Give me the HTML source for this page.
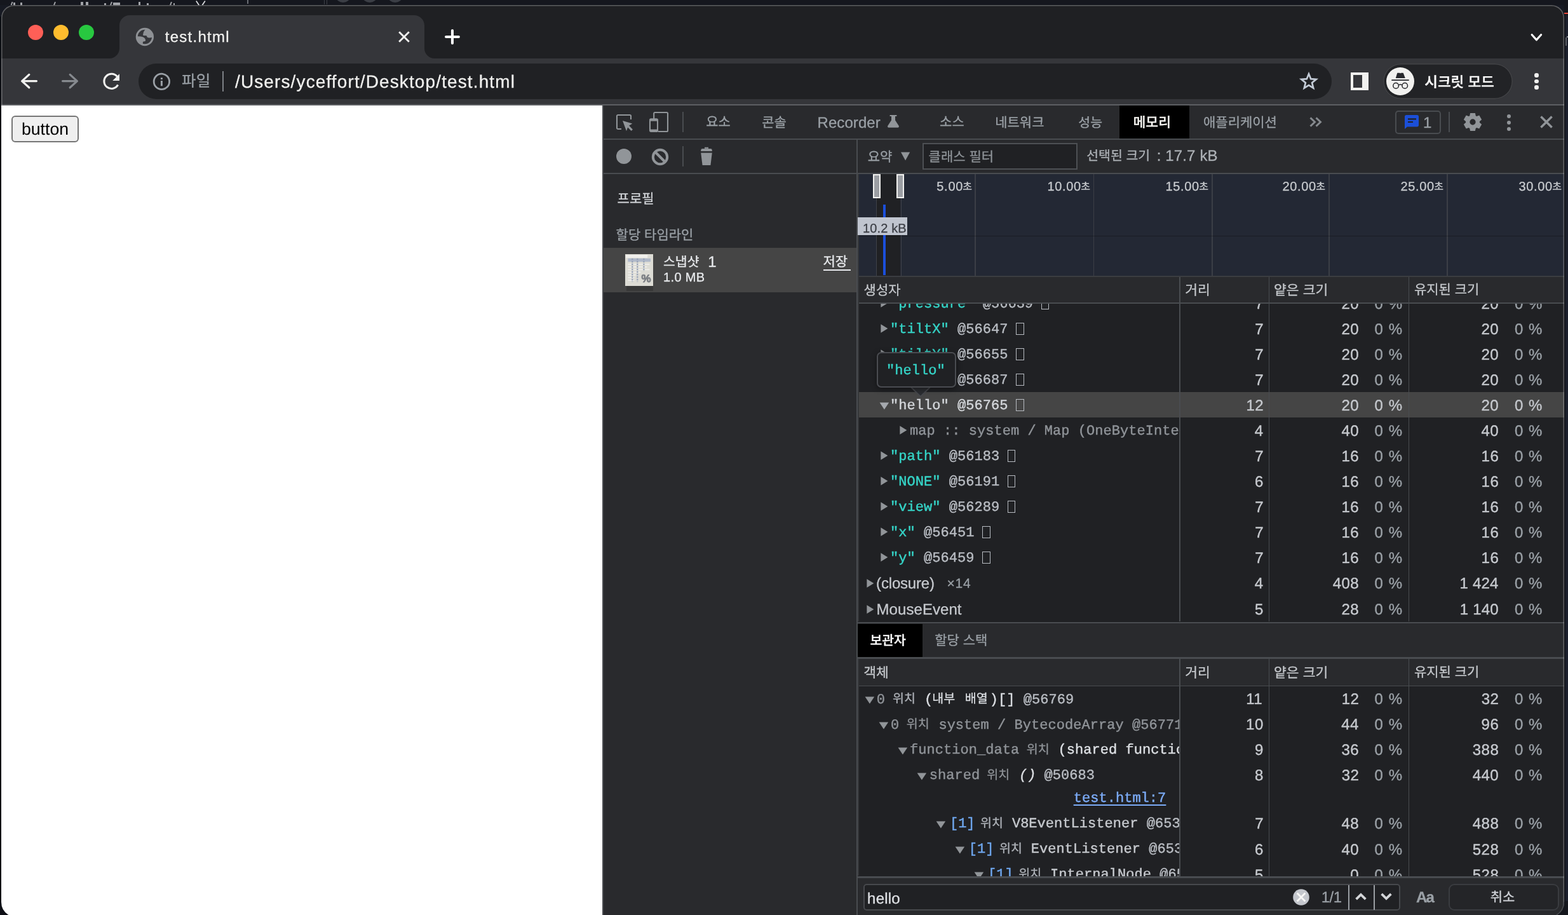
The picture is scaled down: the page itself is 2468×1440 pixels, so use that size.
<!DOCTYPE html>
<html lang="ko"><head><meta charset="utf-8"><title>test.html</title><style>
html,body{margin:0;padding:0;background:#171a23;}
body{text-rendering:geometricPrecision;width:2468px;height:1440px;overflow:hidden;position:relative;font-family:"Liberation Sans",sans-serif;-webkit-font-smoothing:antialiased;}
.a,.t{position:absolute;display:block;}
.t{white-space:pre;margin:0;padding:0;}
.cl{position:absolute;left:0;top:0;width:2468px;height:1440px;}
#win{will-change:transform;position:absolute;left:0;top:0;width:2468px;height:1440px;clip-path:inset(8px 6px 0 2px round 20px 20px 0 0);}
#ring{position:absolute;left:2px;top:8px;width:2460px;height:1460px;border-radius:20px;box-shadow:inset 0 0 0 1.5px rgba(255,255,255,.28);pointer-events:none;}
button{text-rendering:geometricPrecision;font-family:"Liberation Sans",sans-serif;font-size:26.67px;line-height:30px;color:#000;background:#efefef;border:2px solid #767676;border-radius:6px;padding:0 0 0 0;margin:0;box-sizing:border-box;text-align:center;}
.t{-webkit-text-stroke:.28px currentColor;}
.ko{font-family:"Liberation Sans","Noto Sans CJK KR",sans-serif;}
.mo{font-family:"Liberation Mono",monospace;line-height:40px;letter-spacing:.04px;-webkit-text-stroke:.42px currentColor;}
.bx{display:inline-block;box-sizing:border-box;width:12.4px;height:18.6px;border:1.7px solid currentColor;vertical-align:-3.2px;margin-left:-.4px;color:#b8bcc2}
.lnk{color:#7cacf8;text-decoration:underline;text-underline-offset:4px;text-decoration-thickness:2px;}
</style></head><body>
<div class="a " style="left:0px;top:0px;width:2468px;height:1440px;background:#171a23;"></div>
<div class="a " style="left:0px;top:0px;width:2468px;height:8px;background:#15171e;"></div>
<div class="a " style="left:0px;top:26px;width:2px;height:1414px;background:#0c0e13;"></div>
<div class="a " style="left:21px;top:3.6px;width:2.6px;height:4.4px;background:#c3c5c9;opacity:.8"></div>
<div class="a " style="left:32px;top:3.6px;width:2.6px;height:4.4px;background:#c3c5c9;opacity:.8"></div>
<div class="a " style="left:126.5px;top:3.4px;width:4px;height:4.6px;background:#c3c5c9;opacity:.8"></div>
<div class="a " style="left:134.5px;top:3.4px;width:4px;height:4.6px;background:#c3c5c9;opacity:.8"></div>
<div class="a " style="left:164px;top:5.4px;width:2.6px;height:2.6px;background:#c3c5c9;opacity:.8"></div>
<div class="a " style="left:178px;top:3.8px;width:11px;height:4.2px;background:#c3c5c9;opacity:.8"></div>
<div class="a " style="left:218.2px;top:3.4px;width:2.4px;height:4.6px;background:#c3c5c9;opacity:.8"></div>
<div class="a " style="left:231.4px;top:5.2px;width:2.2px;height:2.8px;background:#c3c5c9;opacity:.8"></div>
<div class="a " style="left:272.6px;top:5.2px;width:2.4px;height:2.8px;background:#c3c5c9;opacity:.8"></div>
<svg class="a" style="left:14px;top:0px;" width="320" height="8" viewBox="0 0 320 8"><path d="M17.600000000000001 8l2-5M85 8l2-5M174 8l2-5M268 8l2-5" stroke="#c3c5c9" stroke-width="2" transform="translate(-14,0)" opacity=".8"/><path d="M308.8 1.6l4.4 6.400000000000001M322.8 1.6l-4.4 6.4" stroke="#d8dadd" stroke-width="1.8" transform="translate(-14,0)"/></svg>
<div class="a " style="left:389px;top:0px;width:2px;height:6px;background:#6a6d73;"></div>
<div class="a " style="left:510px;top:0px;width:1px;height:7px;background:#3c3f46;"></div>
<div class="a " style="left:514px;top:0px;width:1px;height:7px;background:#3c3f46;"></div>
<div class="a " style="left:529px;top:-14px;width:22px;height:18px;background:#3b3e45;border-radius:50%"></div>
<div class="a " style="left:571px;top:-14px;width:22px;height:18px;background:#3b3e45;border-radius:50%"></div>
<div class="a " style="left:611px;top:-14px;width:22px;height:18px;background:#3b3e45;border-radius:50%"></div>
<div class="a " style="left:2462px;top:0px;width:6px;height:1440px;background:#15171d;"></div>
<div class="a " style="left:2464px;top:24px;width:4px;height:1416px;background:#1b1f2b;"></div>
<div class="a " style="left:2462px;top:20px;width:6px;height:2px;background:#e5493c;"></div>
<div class="a " style="left:2465.5px;top:56.5px;width:2.5px;height:2px;background:#8a8d92;"></div>
<div class="a " style="left:2464px;top:59px;width:1.6px;height:13px;background:#5d6066;"></div>
<div id="win">
<div class="a " style="left:0px;top:0px;width:2468px;height:92px;background:#1f2023;"></div>
<div class="a " style="left:44px;top:39px;width:24px;height:24px;background:#fe5f57;border-radius:50%"></div>
<div class="a " style="left:84px;top:39px;width:24px;height:24px;background:#febc2e;border-radius:50%"></div>
<div class="a " style="left:124px;top:39px;width:24px;height:24px;background:#28c840;border-radius:50%"></div>
<svg class="a" style="left:172px;top:24px;" width="512" height="68" viewBox="0 0 512 68"><path d="M0 68C8.8 68 16 60.800000000000004 16 52V16C16 7.2 23.2 0 32 0H480C488.8 0 496 7.2 496 16V52C496 60.8 503.2 68 512 68Z" fill="#35363a"/></svg>
<svg class="a" style="left:213px;top:43px;" width="30" height="30" viewBox="0 0 30 30"><circle cx="14.9" cy="15" r="12.65" fill="none" stroke="#8e9195" stroke-width="3"/><path d="M16.8 2.5C14 5 12.5 7.5 12.5 9.5C12.3 11 11.7 11.8 12.2 12.4C13.5 13.4 16 12.6 17.5 13.2C18.5 13.8 18 15 19 15.8C20.5 16.8 24 16.6 27.4 15.6A12.65 12.65 0 0 0 16.8 2.5Z" fill="#8e9195"/><path d="M2.3 14.6C5 14 9 14.2 12 15.2C14.5 16.2 15.8 18 16 20C16.2 21.6 15.5 22.2 14 22.2C12.6 22.2 11.9 22.6 11.8 24C11.7 25.4 12.2 26.4 12.3 27.4A12.65 12.65 0 0 1 2.3 14.6Z" fill="#8e9195"/></svg>
<span class="t " style="top:43.6px;font-size:24px;line-height:29px;color:#f1f1ef;letter-spacing:1.26px;left:259.8px;">test.html</span>
<svg class="a" style="left:626px;top:48px;" width="20" height="20" viewBox="0 0 20 20"><path d="M2.2 2.2l15.6 15.6M17.8 2.2L2.2 17.8" stroke="#f1f1ef" stroke-width="2.9"/></svg>
<svg class="a" style="left:698px;top:44px;" width="28" height="28" viewBox="0 0 28 28"><path d="M14 4.1v19.8M4.1 14h19.8" stroke="#fff" stroke-width="4.1" stroke-linecap="round"/></svg>
<svg class="a" style="left:2406px;top:48px;" width="24" height="20" viewBox="0 0 24 20"><path d="M5.2 6.8l7.2 8 7.2-8" stroke="#fff" stroke-width="3.2" fill="none" stroke-linecap="round" stroke-linejoin="round"/></svg>
<div class="a " style="left:0px;top:92px;width:2468px;height:72px;background:#35363a;"></div>
<div class="a " style="left:0px;top:163.8px;width:2468px;height:2.2px;background:#5d5f63;"></div>
<svg class="a" style="left:28px;top:112px;" width="36" height="32" viewBox="0 0 36 32"><path d="M29.4 15.6H7.2M17.8 5.4L6.6 15.6 17.8 25.8" stroke="#f1f1ef" stroke-width="3.3" fill="none" stroke-linecap="round" stroke-linejoin="round"/></svg>
<svg class="a" style="left:92px;top:112px;" width="36" height="32" viewBox="0 0 36 32"><path d="M6.6 15.6H28.8M18.2 5.4l11.2 10.2L18.2 25.8" stroke="#868a8f" stroke-width="3.3" fill="none" stroke-linecap="round" stroke-linejoin="round"/></svg>
<svg class="a" style="left:158px;top:113.3px;" width="34" height="32" viewBox="0 0 34 32"><path d="M26.9 8.1A11.6 11.6 0 1 0 27.6 20.5" stroke="#f1f1ef" stroke-width="3.1" fill="none"/><path d="M30 3.2V14H19.2z" fill="#f1f1ef"/></svg>
<div class="a " style="left:218px;top:100px;width:1878px;height:56px;background:#202124;border-radius:28px"></div>
<svg class="a" style="left:240px;top:114px;" width="29" height="29" viewBox="0 0 29 29"><circle cx="14.4" cy="14.4" r="12.2" fill="none" stroke="#9aa0a6" stroke-width="2.8"/><path d="M14.4 8.200000000000001v2.9M14.4 13v8.2" stroke="#9aa0a6" stroke-width="3"/></svg>
<span class="t ko" style="left:286.1px;top:113.6px;font-size:24.5px;line-height:30px;color:#9aa0a6;">파일</span>
<div class="a " style="left:350px;top:112px;width:2px;height:32px;background:#7d8186;"></div>
<span class="t " style="top:111.9px;font-size:28px;line-height:34px;color:#f1f1ef;letter-spacing:1.12px;left:370.0px;">/Users/yceffort/Desktop/test.html</span>
<svg class="a" style="left:2043px;top:111px;" width="34" height="34" viewBox="0 0 34 34"><polygon points="17.0,5.3 20.2,13.2 28.7,13.8 22.1,19.3 24.2,27.6 17.0,23.0 9.8,27.6 11.9,19.3 5.3,13.8 13.8,13.2" fill="none" stroke="#c3cbd6" stroke-width="2.7" stroke-linejoin="miter"/></svg>
<div class="a " style="left:2126px;top:114px;width:28px;height:28px;background:#f1f1ef;"></div>
<div class="a " style="left:2130px;top:118px;width:14px;height:20px;background:#35363a;"></div>
<div class="a " style="left:2176.6px;top:100px;width:204px;height:56px;background:#222326;border-radius:28px;box-shadow:inset 0 0 0 1.5px #434447"></div>
<div class="a " style="left:2182px;top:106px;width:44px;height:44px;background:#f1f1ef;border-radius:50%"></div>
<svg class="a" style="left:2186px;top:110px;" width="36" height="36" viewBox="0 0 36 36"><path d="M10.8 13.1L13.3 4.8h3.8l1 .7 1-.7h3.6l3.1 8.3z" fill="#27282c"/><rect x="4.1" y="15.3" width="27.8" height="1.7" rx=".8" fill="#27282c"/><circle cx="11.1" cy="24.9" r="4.3" fill="none" stroke="#27282c" stroke-width="1.5"/><circle cx="25.2" cy="24.9" r="4.3" fill="none" stroke="#27282c" stroke-width="1.5"/><path d="M15.3 23.9c1.8-1.2 3.9-1.2 5.7 0" fill="none" stroke="#27282c" stroke-width="1.4"/></svg>
<span class="t ko" style="left:2242.2px;top:116.3px;font-size:22.5px;line-height:28px;color:#fff;font-weight:500;">시크릿 모드</span>
<div class="a " style="left:2415.1px;top:115.3px;width:6.6px;height:6.6px;background:#f1f1ef;border-radius:50%"></div>
<div class="a " style="left:2415.1px;top:124.8px;width:6.6px;height:6.6px;background:#f1f1ef;border-radius:50%"></div>
<div class="a " style="left:2415.1px;top:134.3px;width:6.6px;height:6.6px;background:#f1f1ef;border-radius:50%"></div>
<div class="a " style="left:0px;top:166px;width:948px;height:1274px;background:#fff;"></div>
<button class="a" style="left:18px;top:182px;width:106px;height:42px;">button</button>
<div class="a " style="left:948px;top:166px;width:1520px;height:1274px;background:#292a2d;"></div>
<div class="a " style="left:948px;top:166px;width:2px;height:1274px;background:#494b4f;"></div>
<div class="a " style="left:950px;top:218px;width:1518px;height:2px;background:#494c50;"></div>
<svg class="a" style="left:968px;top:176px;" width="32" height="34" viewBox="0 0 32 34"><path d="M10 27H4.6A1.6 1.6 0 0 1 3 25.4V6.6A1.6 1.6 0 0 1 4.600000000000001 5H23.4A1.6 1.6 0 0 1 25 6.6V12" fill="none" stroke="#919599" stroke-width="2.1"/><path d="M12 14l15.3 4.4-6.5 4.2L18 30.3z" fill="#919599"/><path d="M20.5 22.5l6.3 6.3" stroke="#919599" stroke-width="3.2"/></svg>
<svg class="a" style="left:1020px;top:174px;" width="34" height="36" viewBox="0 0 34 36"><path d="M9.2 13V4.6A1.6 1.6 0 0 1 10.8 3H29.4A1.6 1.6 0 0 1 31 4.6V31.4A1.6 1.6 0 0 1 29.4 33H16" fill="none" stroke="#919599" stroke-width="2.1"/><rect x="3" y="13.3" width="12" height="19.7" rx="1.6" fill="none" stroke="#919599" stroke-width="2.1"/><rect x="3" y="13" width="12" height="3.6" fill="#919599"/><rect x="3" y="29.6" width="12" height="3.6" fill="#919599"/></svg>
<div class="a " style="left:1074px;top:176px;width:2px;height:32px;background:#494c50;"></div>
<span class="t ko" style="left:1111.3px;top:180.2px;font-size:21px;line-height:26px;color:#9aa0a6;">요소</span>
<span class="t ko" style="left:1199.2px;top:180.7px;font-size:21px;line-height:26px;color:#9aa0a6;">콘솔</span>
<span class="t " style="top:178.5px;font-size:24px;line-height:29px;color:#9aa0a6;letter-spacing:0.08px;left:1286.5px;">Recorder</span>
<svg class="a" style="left:1395px;top:180px;" width="22" height="22" viewBox="0 0 22 22"><path d="M5.6 1h10.8v2H14v6.200000000000001l5.700000000000001 8.9c.7 1.2 0 2.7-1.400000000000001 2.7H3.7c-1.4 0-2.1-1.5-1.4-2.7L8 9.2V3H5.6z" fill="#919599"/></svg>
<span class="t ko" style="left:1479.1px;top:180.3px;font-size:21px;line-height:26px;color:#9aa0a6;">소스</span>
<span class="t ko" style="left:1566.2px;top:180.8px;font-size:21px;line-height:26px;color:#9aa0a6;">네트워크</span>
<span class="t ko" style="left:1697.3px;top:180.7px;font-size:20.5px;line-height:26px;color:#9aa0a6;">성능</span>
<div class="a " style="left:1762px;top:166px;width:110px;height:52px;background:#000;"></div>
<span class="t ko" style="left:1783.6px;top:180.4px;font-size:21.5px;line-height:26px;color:#f4f3ef;font-weight:500;">메모리</span>
<span class="t ko" style="left:1894.0px;top:180.5px;font-size:21px;line-height:26px;color:#9aa0a6;">애플리케이션</span>
<svg class="a" style="left:2058px;top:182px;" width="26" height="20" viewBox="0 0 26 20"><path d="M4.5 3.4l7 6.6-7 6.6M13.5 3.4l7 6.6-7 6.600000000000001" fill="none" stroke="#868a8f" stroke-width="2.900000000000001"/></svg>
<div class="a " style="left:2196px;top:174.2px;width:71.6px;height:36.6px;background:transparent;border-radius:5px;box-shadow:inset 0 0 0 2px #494c50"></div>
<svg class="a" style="left:2210px;top:180px;" width="24" height="24" viewBox="0 0 24 24"><path d="M1 3.6A2.6 2.6 0 0 1 3.6 1H20.4A2.600000000000001 2.600000000000001 0 0 1 23 3.6V16.8A2.600000000000001 2.600000000000001 0 0 1 20.4 19.4H5L1 23z" fill="#1b4fd8"/><path d="M6 7.300000000000001h13M6 12h8" stroke="#202124" stroke-width="2.200000000000001"/></svg>
<span class="t " style="top:178.5px;font-size:24px;line-height:29px;color:#9aa0a6;left:2240.0px;">1</span>
<div class="a " style="left:2280px;top:176px;width:2px;height:32px;background:#494c50;"></div>
<svg class="a" style="left:2303.1px;top:176.9px;" width="30" height="30" viewBox="0 0 30 30"><g transform="translate(15,15)"><path d="M-3.9 -14.1h7.8l1.1 5.6h-10z" transform="rotate(0)" fill="#919599"/><path d="M-3.9 -14.1h7.8l1.1 5.6h-10z" transform="rotate(60)" fill="#919599"/><path d="M-3.9 -14.1h7.8l1.1 5.6h-10z" transform="rotate(120)" fill="#919599"/><path d="M-3.9 -14.1h7.8l1.1 5.6h-10z" transform="rotate(180)" fill="#919599"/><path d="M-3.9 -14.1h7.8l1.1 5.6h-10z" transform="rotate(240)" fill="#919599"/><path d="M-3.9 -14.1h7.8l1.1 5.6h-10z" transform="rotate(300)" fill="#919599"/><circle r="7.75" fill="none" stroke="#919599" stroke-width="6.2"/></g></svg>
<div class="a " style="left:2371.7px;top:179.8px;width:6.4px;height:6.4px;background:#919599;border-radius:50%"></div>
<div class="a " style="left:2371.7px;top:189.5px;width:6.4px;height:6.4px;background:#919599;border-radius:50%"></div>
<div class="a " style="left:2371.7px;top:199.6px;width:6.4px;height:6.4px;background:#919599;border-radius:50%"></div>
<svg class="a" style="left:2422px;top:180px;" width="24" height="24" viewBox="0 0 24 24"><path d="M3.4 3.4l17.2 17.2M20.6 3.4L3.4 20.6" stroke="#919599" stroke-width="3.5"/></svg>
<div class="a " style="left:950px;top:272px;width:1518px;height:2px;background:#494c50;"></div>
<div class="a " style="left:970px;top:234px;width:24.4px;height:24.4px;background:#919599;border-radius:50%"></div>
<svg class="a" style="left:1024px;top:232px;" width="30" height="30" viewBox="0 0 30 30"><circle cx="15" cy="15" r="11.2" fill="none" stroke="#919599" stroke-width="4"/><path d="M7 7l16 16" stroke="#919599" stroke-width="4"/></svg>
<div class="a " style="left:1074px;top:230px;width:2px;height:32px;background:#494c50;"></div>
<svg class="a" style="left:1100px;top:230px;" width="24" height="32" viewBox="0 0 24 32"><path d="M9 1.8h6v2H9zM5.6 4h12.8a2.4 2.4 0 0 1 2.4 2.4V8H3.2V6.4A2.4 2.4 0 0 1 5.6 4zM3.2 10.6h17.6l-2.4 19.4H5.6z" fill="#919599"/></svg>
<div class="a " style="left:1348px;top:220px;width:2px;height:1220px;background:#494c50;"></div>
<span class="t ko" style="left:1365.8px;top:234.6px;font-size:21px;line-height:26px;color:#9aa0a6;">요약</span>
<svg class="a" style="left:1417px;top:238px;" width="16" height="16" viewBox="0 0 16 16"><path d="M1 1.5h14.2L8.1 14.4z" fill="#919599"/></svg>
<div class="a " style="left:1452px;top:225.4px;width:243.7px;height:41.3px;background:#202124;box-shadow:inset 0 0 0 2px #4d5054"></div>
<span class="t ko" style="left:1461.6px;top:234.6px;font-size:21px;line-height:26px;color:#8f9499;">클래스 필터</span>
<span class="t ko" style="left:1710.2px;top:233.4px;font-size:20.5px;line-height:26px;color:#aeb2b7;">선택된 크기</span>
<span class="t " style="top:231.3px;font-size:24px;line-height:29px;color:#aeb2b7;letter-spacing:0.14px;left:1820.7px;">: 17.7 kB</span>
<span class="t ko" style="left:971.6px;top:300.6px;font-size:21px;line-height:26px;color:#d5d8dc;">프로필</span>
<span class="t ko" style="left:969.6px;top:357.7px;font-size:21px;line-height:26px;color:#9aa0a6;">할당 타임라인</span>
<div class="a " style="left:950px;top:390px;width:398px;height:70px;background:#454545;"></div>
<div class="a " style="left:986px;top:450px;width:42px;height:7.5px;background:rgba(0,0,0,.17);"></div>
<svg class="a" style="left:983.6px;top:399.5px;" width="44.8" height="50.6" viewBox="0 0 44.8 50.6"><rect width="44.8" height="50.6" fill="#dddcd5"/><rect x="1.2" y="1.2" width="34" height="4.6" fill="#f1f0ec"/><rect x="4.4" y="15" width="34" height="1.8" fill="#efeeea"/><rect x="4.4" y="19.2" width="30" height="1.8" fill="#efeeea"/><rect x="4.4" y="23.4" width="34" height="1.8" fill="#efeeea"/><rect x="4.4" y="27.6" width="20" height="1.8" fill="#efeeea"/><rect x="4.4" y="31.8" width="12" height="1.8" fill="#efeeea"/><rect x="4.4" y="36" width="10" height="1.8" fill="#efeeea"/><rect x="4.4" y="40.2" width="10" height="1.8" fill="#efeeea"/><rect x="4.4" y="6.7" width="35.7" height="5.2" fill="#b0b9ca"/><path d="M11.3 6.7V43.5M19.3 6.7V43.5" stroke="#97a2b7" stroke-width="2.2" stroke-dasharray="2.6 1.4"/><path d="M29.4 6.7V27" stroke="#97a2b7" stroke-width="2.2" stroke-dasharray="2.6 1.4"/><text x="25.4" y="44.4" font-family="Liberation Sans,sans-serif" font-weight="700" font-size="17" fill="#7c7f84" stroke="#7c7f84" stroke-width=".8">%</text></svg>
<span class="t ko" style="left:1044.0px;top:400.1px;font-size:20.5px;line-height:26px;color:#e8eaed;">스냅샷</span>
<span class="t " style="top:398.3px;font-size:24px;line-height:29px;color:#e8eaed;left:1114.2px;">1</span>
<span class="t " style="top:424.8px;font-size:20px;line-height:24px;color:#e8eaed;letter-spacing:0.32px;left:1044.1px;">1.0 MB</span>
<span class="t ko" style="left:1295.4px;top:399.9px;font-size:21px;line-height:26px;color:#e8eaed;">저장</span>
<div class="a " style="left:1295.5px;top:424px;width:43.5px;height:1.8px;background:#e8eaed;"></div>
<div class="a " style="left:1352px;top:274px;width:1116px;height:160px;background:#232834;"></div>
<div class="a " style="left:1380px;top:274px;width:37px;height:160px;background:#202124;"></div>
<div class="a " style="left:1534.3px;top:274px;width:1.8px;height:160px;background:#3b3e46;"></div>
<div class="a " style="left:1720.5px;top:274px;width:1.8px;height:160px;background:#3b3e46;"></div>
<div class="a " style="left:1906.8px;top:274px;width:1.8px;height:160px;background:#3b3e46;"></div>
<div class="a " style="left:2091.3px;top:274px;width:1.8px;height:160px;background:#3b3e46;"></div>
<div class="a " style="left:2277.3px;top:274px;width:1.8px;height:160px;background:#3b3e46;"></div>
<div class="a " style="left:1352px;top:370.6px;width:1116px;height:1.2px;background:rgba(0,0,0,.27);"></div>
<div class="a " style="left:1379px;top:312px;width:1px;height:122px;background:#3f424a;"></div>
<div class="a " style="left:1417.5px;top:312px;width:1px;height:122px;background:#3f424a;"></div>
<div class="a " style="left:1374px;top:274px;width:12px;height:38px;background:#9b9ea3;box-shadow:inset 0 0 0 2px #f1f1ef"></div>
<div class="a " style="left:1411px;top:274px;width:12px;height:38px;background:#9b9ea3;box-shadow:inset 0 0 0 2px #f1f1ef"></div>
<div class="a " style="left:1389.8px;top:322px;width:4.2px;height:111px;background:#1b4fdc;"></div>
<span class="t " style="top:282.1px;font-size:20px;line-height:24px;color:#c8cbcf;letter-spacing:0.70px;left:1474.3px;">5.00</span>
<span class="t ko" style="left:1515.2px;top:284.9px;font-size:16px;line-height:20px;color:#c8cbcf;">초</span>
<span class="t " style="top:282.1px;font-size:20px;line-height:24px;color:#c8cbcf;letter-spacing:0.70px;left:1648.4px;">10.00</span>
<span class="t ko" style="left:1701.2px;top:284.9px;font-size:16px;line-height:20px;color:#c8cbcf;">초</span>
<span class="t " style="top:282.1px;font-size:20px;line-height:24px;color:#c8cbcf;letter-spacing:0.70px;left:1834.4px;">15.00</span>
<span class="t ko" style="left:1887.2px;top:284.9px;font-size:16px;line-height:20px;color:#c8cbcf;">초</span>
<span class="t " style="top:282.1px;font-size:20px;line-height:24px;color:#c8cbcf;letter-spacing:0.70px;left:2018.4px;">20.00</span>
<span class="t ko" style="left:2071.2px;top:284.9px;font-size:16px;line-height:20px;color:#c8cbcf;">초</span>
<span class="t " style="top:282.1px;font-size:20px;line-height:24px;color:#c8cbcf;letter-spacing:0.70px;left:2204.4px;">25.00</span>
<span class="t ko" style="left:2257.2px;top:284.9px;font-size:16px;line-height:20px;color:#c8cbcf;">초</span>
<span class="t " style="top:282.1px;font-size:20px;line-height:24px;color:#c8cbcf;letter-spacing:0.70px;left:2390.4px;">30.00</span>
<span class="t ko" style="left:2443.2px;top:284.9px;font-size:16px;line-height:20px;color:#c8cbcf;">초</span>
<div class="a " style="left:1350px;top:433.8px;width:1118px;height:2px;background:#3b3d41;"></div>
<span class="t ko" style="left:1359.6px;top:444.5px;font-size:21px;line-height:26px;color:#c4c7cb;">생성자</span>
<span class="t ko" style="left:1865.2px;top:444.3px;font-size:21.5px;line-height:26px;color:#c4c7cb;">거리</span>
<span class="t ko" style="left:2005.1px;top:444.3px;font-size:21.5px;line-height:26px;color:#c4c7cb;">얕은 크기</span>
<span class="t ko" style="left:2225.9px;top:444.4px;font-size:21px;line-height:26px;color:#c4c7cb;">유지된 크기</span>
<div class="a " style="left:1350px;top:476px;width:1118px;height:2px;background:#494c50;"></div>
<div class="cl" style="clip-path:inset(478px 0px 461px 1350px);">
<div class="a " style="left:1350px;top:478px;width:1118px;height:501px;background:#202124;"></div>
<div class="a " style="left:1350px;top:617px;width:1118px;height:40px;background:#454545;"></div>
<div class="cl" style="clip-path:inset(478px 612px 461px 1350px);">
<svg class="a" style="left:1385.6px;top:469px;" width="12" height="16" viewBox="0 0 12 16"><path d="M.4 1.2L11.4 8 .4 14.8z" fill="#919599"/></svg>
<span class="t mo" style="left:1401.0px;top:458.8px;font-size:22px"><span style="color:#35d4c7;">&quot;pressure&quot;</span><span style="color:#b8bcc2;"> @56639 </span><i class="bx"></i></span>
<svg class="a" style="left:1385.6px;top:509px;" width="12" height="16" viewBox="0 0 12 16"><path d="M.4 1.2L11.4 8 .4 14.8z" fill="#919599"/></svg>
<span class="t mo" style="left:1401.0px;top:498.8px;font-size:22px"><span style="color:#35d4c7;">&quot;tiltX&quot;</span><span style="color:#b8bcc2;"> @56647 </span><i class="bx"></i></span>
<svg class="a" style="left:1385.6px;top:549px;" width="12" height="16" viewBox="0 0 12 16"><path d="M.4 1.2L11.4 8 .4 14.8z" fill="#919599"/></svg>
<span class="t mo" style="left:1401.0px;top:538.8px;font-size:22px"><span style="color:#35d4c7;">&quot;tiltY&quot;</span><span style="color:#b8bcc2;"> @56655 </span><i class="bx"></i></span>
<svg class="a" style="left:1385.6px;top:589px;" width="12" height="16" viewBox="0 0 12 16"><path d="M.4 1.2L11.4 8 .4 14.8z" fill="#919599"/></svg>
<span class="t mo" style="left:1401.0px;top:578.8px;font-size:22px"><span style="color:#35d4c7;">&quot;twist&quot;</span><span style="color:#b8bcc2;"> @56687 </span><i class="bx"></i></span>
<svg class="a" style="left:1385.6px;top:709px;" width="12" height="16" viewBox="0 0 12 16"><path d="M.4 1.2L11.4 8 .4 14.8z" fill="#919599"/></svg>
<span class="t mo" style="left:1401.0px;top:698.8px;font-size:22px"><span style="color:#35d4c7;">&quot;path&quot;</span><span style="color:#b8bcc2;"> @56183 </span><i class="bx"></i></span>
<svg class="a" style="left:1385.6px;top:749px;" width="12" height="16" viewBox="0 0 12 16"><path d="M.4 1.2L11.4 8 .4 14.8z" fill="#919599"/></svg>
<span class="t mo" style="left:1401.0px;top:738.8px;font-size:22px"><span style="color:#35d4c7;">&quot;NONE&quot;</span><span style="color:#b8bcc2;"> @56191 </span><i class="bx"></i></span>
<svg class="a" style="left:1385.6px;top:789px;" width="12" height="16" viewBox="0 0 12 16"><path d="M.4 1.2L11.4 8 .4 14.8z" fill="#919599"/></svg>
<span class="t mo" style="left:1401.0px;top:778.8px;font-size:22px"><span style="color:#35d4c7;">&quot;view&quot;</span><span style="color:#b8bcc2;"> @56289 </span><i class="bx"></i></span>
<svg class="a" style="left:1385.6px;top:829px;" width="12" height="16" viewBox="0 0 12 16"><path d="M.4 1.2L11.4 8 .4 14.8z" fill="#919599"/></svg>
<span class="t mo" style="left:1401.0px;top:818.8px;font-size:22px"><span style="color:#35d4c7;">&quot;x&quot;</span><span style="color:#b8bcc2;"> @56451 </span><i class="bx"></i></span>
<svg class="a" style="left:1385.6px;top:869px;" width="12" height="16" viewBox="0 0 12 16"><path d="M.4 1.2L11.4 8 .4 14.8z" fill="#919599"/></svg>
<span class="t mo" style="left:1401.0px;top:858.8px;font-size:22px"><span style="color:#35d4c7;">&quot;y&quot;</span><span style="color:#b8bcc2;"> @56459 </span><i class="bx"></i></span>
<svg class="a" style="left:1383.6px;top:632.5px;" width="16" height="12" viewBox="0 0 16 12"><path d="M.6.5h14.6L7.9 11.6z" fill="#a5a9ae"/></svg>
<span class="t mo" style="left:1401.0px;top:618.8px;font-size:22px"><span style="color:#d3d6da;">&quot;hello&quot;</span><span style="color:#d3d6da;"> @56765 </span><i class="bx"></i></span>
<svg class="a" style="left:1416px;top:669px;" width="12" height="16" viewBox="0 0 12 16"><path d="M.4 1.2L11.4 8 .4 14.8z" fill="#919599"/></svg>
<span class="t mo" style="left:1432.0px;top:658.8px;font-size:22px"><span style="color:#8f9398;">map :: system / Map (OneByteInternalizedString) @123</span></span>
<svg class="a" style="left:1363.8px;top:910px;" width="12" height="16" viewBox="0 0 12 16"><path d="M.4 1.2L11.4 8 .4 14.8z" fill="#919599"/></svg>
<span class="t " style="top:903.9px;font-size:24px;line-height:29px;color:#c6c9ce;letter-spacing:-0.18px;left:1379.1px;">(closure)</span>
<span class="t " style="top:906.3px;font-size:21px;line-height:25px;color:#9aa0a6;letter-spacing:0.72px;left:1490.5px;">×14</span>
<svg class="a" style="left:1363.8px;top:951px;" width="12" height="16" viewBox="0 0 12 16"><path d="M.4 1.2L11.4 8 .4 14.8z" fill="#919599"/></svg>
<span class="t " style="top:944.9px;font-size:24px;line-height:29px;color:#c6c9ce;letter-spacing:0.07px;left:1379.5px;">MouseEvent</span>
</div>
<span class="t " style="top:463.8px;font-size:24px;line-height:29px;color:#c6c9ce;letter-spacing:0.45px;left:1975.2px;-webkit-text-stroke-width:.4px;">7</span>
<span class="t " style="top:463.8px;font-size:24px;line-height:29px;color:#c6c9ce;letter-spacing:0.45px;left:2111.4px;-webkit-text-stroke-width:.4px;">20</span>
<span class="t " style="top:463.8px;font-size:24px;line-height:29px;color:#9aa0a6;letter-spacing:1.10px;left:2163.5px;-webkit-text-stroke-width:.4px;">0 %</span>
<span class="t " style="top:463.8px;font-size:24px;line-height:29px;color:#c6c9ce;letter-spacing:0.45px;left:2331.5px;-webkit-text-stroke-width:.4px;">20</span>
<span class="t " style="top:463.8px;font-size:24px;line-height:29px;color:#9aa0a6;letter-spacing:1.10px;left:2383.9px;-webkit-text-stroke-width:.4px;">0 %</span>
<span class="t " style="top:503.8px;font-size:24px;line-height:29px;color:#c6c9ce;letter-spacing:0.45px;left:1975.2px;-webkit-text-stroke-width:.4px;">7</span>
<span class="t " style="top:503.8px;font-size:24px;line-height:29px;color:#c6c9ce;letter-spacing:0.45px;left:2111.4px;-webkit-text-stroke-width:.4px;">20</span>
<span class="t " style="top:503.8px;font-size:24px;line-height:29px;color:#9aa0a6;letter-spacing:1.10px;left:2163.5px;-webkit-text-stroke-width:.4px;">0 %</span>
<span class="t " style="top:503.8px;font-size:24px;line-height:29px;color:#c6c9ce;letter-spacing:0.45px;left:2331.5px;-webkit-text-stroke-width:.4px;">20</span>
<span class="t " style="top:503.8px;font-size:24px;line-height:29px;color:#9aa0a6;letter-spacing:1.10px;left:2383.9px;-webkit-text-stroke-width:.4px;">0 %</span>
<span class="t " style="top:543.8px;font-size:24px;line-height:29px;color:#c6c9ce;letter-spacing:0.45px;left:1975.2px;-webkit-text-stroke-width:.4px;">7</span>
<span class="t " style="top:543.8px;font-size:24px;line-height:29px;color:#c6c9ce;letter-spacing:0.45px;left:2111.4px;-webkit-text-stroke-width:.4px;">20</span>
<span class="t " style="top:543.8px;font-size:24px;line-height:29px;color:#9aa0a6;letter-spacing:1.10px;left:2163.5px;-webkit-text-stroke-width:.4px;">0 %</span>
<span class="t " style="top:543.8px;font-size:24px;line-height:29px;color:#c6c9ce;letter-spacing:0.45px;left:2331.5px;-webkit-text-stroke-width:.4px;">20</span>
<span class="t " style="top:543.8px;font-size:24px;line-height:29px;color:#9aa0a6;letter-spacing:1.10px;left:2383.9px;-webkit-text-stroke-width:.4px;">0 %</span>
<span class="t " style="top:583.8px;font-size:24px;line-height:29px;color:#c6c9ce;letter-spacing:0.45px;left:1975.2px;-webkit-text-stroke-width:.4px;">7</span>
<span class="t " style="top:583.8px;font-size:24px;line-height:29px;color:#c6c9ce;letter-spacing:0.45px;left:2111.4px;-webkit-text-stroke-width:.4px;">20</span>
<span class="t " style="top:583.8px;font-size:24px;line-height:29px;color:#9aa0a6;letter-spacing:1.10px;left:2163.5px;-webkit-text-stroke-width:.4px;">0 %</span>
<span class="t " style="top:583.8px;font-size:24px;line-height:29px;color:#c6c9ce;letter-spacing:0.45px;left:2331.5px;-webkit-text-stroke-width:.4px;">20</span>
<span class="t " style="top:583.8px;font-size:24px;line-height:29px;color:#9aa0a6;letter-spacing:1.10px;left:2383.9px;-webkit-text-stroke-width:.4px;">0 %</span>
<span class="t " style="top:703.8px;font-size:24px;line-height:29px;color:#c6c9ce;letter-spacing:0.45px;left:1975.2px;-webkit-text-stroke-width:.4px;">7</span>
<span class="t " style="top:703.8px;font-size:24px;line-height:29px;color:#c6c9ce;letter-spacing:0.45px;left:2111.5px;-webkit-text-stroke-width:.4px;">16</span>
<span class="t " style="top:703.8px;font-size:24px;line-height:29px;color:#9aa0a6;letter-spacing:1.10px;left:2163.5px;-webkit-text-stroke-width:.4px;">0 %</span>
<span class="t " style="top:703.8px;font-size:24px;line-height:29px;color:#c6c9ce;letter-spacing:0.45px;left:2331.6px;-webkit-text-stroke-width:.4px;">16</span>
<span class="t " style="top:703.8px;font-size:24px;line-height:29px;color:#9aa0a6;letter-spacing:1.10px;left:2383.9px;-webkit-text-stroke-width:.4px;">0 %</span>
<span class="t " style="top:743.8px;font-size:24px;line-height:29px;color:#c6c9ce;letter-spacing:0.45px;left:1975.0px;-webkit-text-stroke-width:.4px;">6</span>
<span class="t " style="top:743.8px;font-size:24px;line-height:29px;color:#c6c9ce;letter-spacing:0.45px;left:2111.5px;-webkit-text-stroke-width:.4px;">16</span>
<span class="t " style="top:743.8px;font-size:24px;line-height:29px;color:#9aa0a6;letter-spacing:1.10px;left:2163.5px;-webkit-text-stroke-width:.4px;">0 %</span>
<span class="t " style="top:743.8px;font-size:24px;line-height:29px;color:#c6c9ce;letter-spacing:0.45px;left:2331.6px;-webkit-text-stroke-width:.4px;">16</span>
<span class="t " style="top:743.8px;font-size:24px;line-height:29px;color:#9aa0a6;letter-spacing:1.10px;left:2383.9px;-webkit-text-stroke-width:.4px;">0 %</span>
<span class="t " style="top:783.8px;font-size:24px;line-height:29px;color:#c6c9ce;letter-spacing:0.45px;left:1975.2px;-webkit-text-stroke-width:.4px;">7</span>
<span class="t " style="top:783.8px;font-size:24px;line-height:29px;color:#c6c9ce;letter-spacing:0.45px;left:2111.5px;-webkit-text-stroke-width:.4px;">16</span>
<span class="t " style="top:783.8px;font-size:24px;line-height:29px;color:#9aa0a6;letter-spacing:1.10px;left:2163.5px;-webkit-text-stroke-width:.4px;">0 %</span>
<span class="t " style="top:783.8px;font-size:24px;line-height:29px;color:#c6c9ce;letter-spacing:0.45px;left:2331.6px;-webkit-text-stroke-width:.4px;">16</span>
<span class="t " style="top:783.8px;font-size:24px;line-height:29px;color:#9aa0a6;letter-spacing:1.10px;left:2383.9px;-webkit-text-stroke-width:.4px;">0 %</span>
<span class="t " style="top:823.8px;font-size:24px;line-height:29px;color:#c6c9ce;letter-spacing:0.45px;left:1975.2px;-webkit-text-stroke-width:.4px;">7</span>
<span class="t " style="top:823.8px;font-size:24px;line-height:29px;color:#c6c9ce;letter-spacing:0.45px;left:2111.5px;-webkit-text-stroke-width:.4px;">16</span>
<span class="t " style="top:823.8px;font-size:24px;line-height:29px;color:#9aa0a6;letter-spacing:1.10px;left:2163.5px;-webkit-text-stroke-width:.4px;">0 %</span>
<span class="t " style="top:823.8px;font-size:24px;line-height:29px;color:#c6c9ce;letter-spacing:0.45px;left:2331.6px;-webkit-text-stroke-width:.4px;">16</span>
<span class="t " style="top:823.8px;font-size:24px;line-height:29px;color:#9aa0a6;letter-spacing:1.10px;left:2383.9px;-webkit-text-stroke-width:.4px;">0 %</span>
<span class="t " style="top:863.8px;font-size:24px;line-height:29px;color:#c6c9ce;letter-spacing:0.45px;left:1975.2px;-webkit-text-stroke-width:.4px;">7</span>
<span class="t " style="top:863.8px;font-size:24px;line-height:29px;color:#c6c9ce;letter-spacing:0.45px;left:2111.5px;-webkit-text-stroke-width:.4px;">16</span>
<span class="t " style="top:863.8px;font-size:24px;line-height:29px;color:#9aa0a6;letter-spacing:1.10px;left:2163.5px;-webkit-text-stroke-width:.4px;">0 %</span>
<span class="t " style="top:863.8px;font-size:24px;line-height:29px;color:#c6c9ce;letter-spacing:0.45px;left:2331.6px;-webkit-text-stroke-width:.4px;">16</span>
<span class="t " style="top:863.8px;font-size:24px;line-height:29px;color:#9aa0a6;letter-spacing:1.10px;left:2383.9px;-webkit-text-stroke-width:.4px;">0 %</span>
<span class="t " style="top:623.8px;font-size:24px;line-height:29px;color:#c6c9ce;letter-spacing:0.45px;left:1961.4px;-webkit-text-stroke-width:.4px;">12</span>
<span class="t " style="top:623.8px;font-size:24px;line-height:29px;color:#c6c9ce;letter-spacing:0.45px;left:2111.4px;-webkit-text-stroke-width:.4px;">20</span>
<span class="t " style="top:623.8px;font-size:24px;line-height:29px;color:#c3c6cb;letter-spacing:1.10px;left:2163.5px;-webkit-text-stroke-width:.4px;">0 %</span>
<span class="t " style="top:623.8px;font-size:24px;line-height:29px;color:#c6c9ce;letter-spacing:0.45px;left:2331.5px;-webkit-text-stroke-width:.4px;">20</span>
<span class="t " style="top:623.8px;font-size:24px;line-height:29px;color:#c3c6cb;letter-spacing:1.10px;left:2383.9px;-webkit-text-stroke-width:.4px;">0 %</span>
<span class="t " style="top:663.8px;font-size:24px;line-height:29px;color:#c6c9ce;letter-spacing:0.45px;left:1974.7px;-webkit-text-stroke-width:.4px;">4</span>
<span class="t " style="top:663.8px;font-size:24px;line-height:29px;color:#c6c9ce;letter-spacing:0.45px;left:2111.4px;-webkit-text-stroke-width:.4px;">40</span>
<span class="t " style="top:663.8px;font-size:24px;line-height:29px;color:#9aa0a6;letter-spacing:1.10px;left:2163.5px;-webkit-text-stroke-width:.4px;">0 %</span>
<span class="t " style="top:663.8px;font-size:24px;line-height:29px;color:#c6c9ce;letter-spacing:0.45px;left:2331.5px;-webkit-text-stroke-width:.4px;">40</span>
<span class="t " style="top:663.8px;font-size:24px;line-height:29px;color:#9aa0a6;letter-spacing:1.10px;left:2383.9px;-webkit-text-stroke-width:.4px;">0 %</span>
<span class="t " style="top:904.3px;font-size:24px;line-height:29px;color:#c6c9ce;letter-spacing:0.45px;left:1974.7px;-webkit-text-stroke-width:.4px;">4</span>
<span class="t " style="top:904.3px;font-size:24px;line-height:29px;color:#c6c9ce;letter-spacing:0.45px;left:2097.7px;-webkit-text-stroke-width:.4px;">408</span>
<span class="t " style="top:904.3px;font-size:24px;line-height:29px;color:#9aa0a6;letter-spacing:1.10px;left:2163.5px;-webkit-text-stroke-width:.4px;">0 %</span>
<span class="t " style="top:904.3px;font-size:24px;line-height:29px;color:#c6c9ce;letter-spacing:0.20px;left:2297.5px;-webkit-text-stroke-width:.4px;">1 424</span>
<span class="t " style="top:904.3px;font-size:24px;line-height:29px;color:#9aa0a6;letter-spacing:1.10px;left:2383.9px;-webkit-text-stroke-width:.4px;">0 %</span>
<span class="t " style="top:945.3px;font-size:24px;line-height:29px;color:#c6c9ce;letter-spacing:0.45px;left:1975.0px;-webkit-text-stroke-width:.4px;">5</span>
<span class="t " style="top:945.3px;font-size:24px;line-height:29px;color:#c6c9ce;letter-spacing:0.45px;left:2111.5px;-webkit-text-stroke-width:.4px;">28</span>
<span class="t " style="top:945.3px;font-size:24px;line-height:29px;color:#9aa0a6;letter-spacing:1.10px;left:2163.5px;-webkit-text-stroke-width:.4px;">0 %</span>
<span class="t " style="top:945.3px;font-size:24px;line-height:29px;color:#c6c9ce;letter-spacing:0.20px;left:2297.8px;-webkit-text-stroke-width:.4px;">1 140</span>
<span class="t " style="top:945.3px;font-size:24px;line-height:29px;color:#9aa0a6;letter-spacing:1.10px;left:2383.9px;-webkit-text-stroke-width:.4px;">0 %</span>
<div class="a " style="left:1856px;top:478px;width:1.6px;height:500px;background:#494c50;"></div>
<div class="a " style="left:1996.5px;top:478px;width:1.6px;height:500px;background:#494c50;"></div>
<div class="a " style="left:2216.5px;top:478px;width:1.6px;height:500px;background:#494c50;"></div>
</div>
<div class="a " style="left:1856px;top:436px;width:1.6px;height:42px;background:#494c50;"></div>
<div class="a " style="left:1996.5px;top:436px;width:1.6px;height:42px;background:#494c50;"></div>
<div class="a " style="left:2216.5px;top:436px;width:1.6px;height:42px;background:#494c50;"></div>
<svg class="a" style="left:1430px;top:606px;" width="40" height="22" viewBox="0 0 40 22"><path d="M3 2.5h32L18.9 18z" fill="#2b2d31" stroke="#45474c" stroke-width="1.8"/></svg>
<div class="a " style="left:1380px;top:554.2px;width:124.6px;height:55.8px;background:#202124;border-radius:7px;box-shadow:inset 0 0 0 2px #4a4c51,0 2px 10px rgba(0,0,0,.45)"></div>
<span class="t mo" style="left:1395.1px;top:564.1px;font-size:22px;color:#35d4c7">"hello"</span>
<div class="a " style="left:1350px;top:979px;width:1118px;height:2.8px;background:#494c50;"></div>
<div class="a " style="left:1350px;top:980.5px;width:1118px;height:54px;background:#292a2d;"></div>
<div class="a " style="left:1350px;top:981.8px;width:102px;height:52.2px;background:#000;"></div>
<span class="t ko" style="left:1369.4px;top:996.1px;font-size:20.5px;line-height:26px;color:#fff;font-weight:500;">보관자</span>
<span class="t ko" style="left:1471.3px;top:995.9px;font-size:21px;line-height:26px;color:#9aa0a6;">할당 스택</span>
<div class="a " style="left:1350px;top:1034px;width:1118px;height:2.8px;background:#494c50;"></div>
<div class="a " style="left:1350px;top:1036.7px;width:1118px;height:42px;background:#292a2d;"></div>
<span class="t ko" style="left:1359.2px;top:1045.7px;font-size:21.5px;line-height:26px;color:#c4c7cb;">객체</span>
<span class="t ko" style="left:1865.2px;top:1045.6px;font-size:21.5px;line-height:26px;color:#c4c7cb;">거리</span>
<span class="t ko" style="left:2005.1px;top:1045.6px;font-size:21.5px;line-height:26px;color:#c4c7cb;">얕은 크기</span>
<span class="t ko" style="left:2225.9px;top:1045.7px;font-size:21px;line-height:26px;color:#c4c7cb;">유지된 크기</span>
<div class="a " style="left:1856px;top:1037px;width:1.6px;height:42px;background:#494c50;"></div>
<div class="a " style="left:1996.5px;top:1037px;width:1.6px;height:42px;background:#494c50;"></div>
<div class="a " style="left:2216.5px;top:1037px;width:1.6px;height:42px;background:#494c50;"></div>
<div class="a " style="left:1350px;top:1078.5px;width:1118px;height:1.8px;background:#494c50;"></div>
<div class="cl" style="clip-path:inset(1080px 0px 60.8px 1350px);">
<div class="a " style="left:1350px;top:1080px;width:1118px;height:299.2px;background:#202124;"></div>
<div class="cl" style="clip-path:inset(1080px 612px 60.8px 1350px);">
<svg class="a" style="left:1361.1px;top:1096.1px;" width="16" height="12" viewBox="0 0 16 12"><path d="M.6.5h14.6L7.9 11.6z" fill="#919599"/></svg>
<span class="t mo" style="left:1379.7px;top:1081.5px;font-size:22px"><span style="color:#8f9398;">0</span></span>
<span class="t ko" style="left:1405.0px;top:1087.2px;font-size:19.5px;line-height:26px;color:#aeb2b8;">위치</span>
<span class="t mo" style="left:1455.0px;top:1081.5px;font-size:22px"><span style="color:#dcdfe3;">(</span></span>
<span class="t ko" style="left:1467.2px;top:1087.2px;font-size:19.5px;line-height:26px;color:#dcdfe3;">내부</span>
<span class="t ko" style="left:1518.7px;top:1087.4px;font-size:19.5px;line-height:26px;color:#dcdfe3;">배열</span>
<span class="t mo" style="left:1557.8px;top:1081.5px;font-size:22px"><span style="color:#dcdfe3;">)[]</span><span style="color:#b8bcc2;"> @56769</span></span>
<svg class="a" style="left:1383.2px;top:1136.1px;" width="16" height="12" viewBox="0 0 16 12"><path d="M.6.5h14.6L7.9 11.6z" fill="#919599"/></svg>
<span class="t mo" style="left:1401.9px;top:1121.5px;font-size:22px"><span style="color:#8f9398;">0</span></span>
<span class="t ko" style="left:1426.8px;top:1127.2px;font-size:19.5px;line-height:26px;color:#8f9398;">위치</span>
<span class="t mo" style="left:1477.4px;top:1121.5px;font-size:22px"><span style="color:#8f9398;">system / BytecodeArray @56771</span></span>
<svg class="a" style="left:1412.8px;top:1175.9px;" width="16" height="12" viewBox="0 0 16 12"><path d="M.6.5h14.6L7.9 11.6z" fill="#919599"/></svg>
<span class="t mo" style="left:1432.0px;top:1161.3px;font-size:22px"><span style="color:#8f9398;">function_data</span></span>
<span class="t ko" style="left:1615.7px;top:1167.0px;font-size:19.5px;line-height:26px;color:#8f9398;">위치</span>
<span class="t mo" style="left:1665.6px;top:1161.3px;font-size:22px"><span style="color:#dcdfe3;">(shared function info)</span></span>
<svg class="a" style="left:1443.3px;top:1215.9px;" width="16" height="12" viewBox="0 0 16 12"><path d="M.6.5h14.6L7.9 11.6z" fill="#919599"/></svg>
<span class="t mo" style="left:1462.7px;top:1201.3px;font-size:22px"><span style="color:#8f9398;">shared</span></span>
<span class="t ko" style="left:1553.2px;top:1207.0px;font-size:19.5px;line-height:26px;color:#8f9398;">위치</span>
<span class="t mo" style="left:1603.9px;top:1201.3px;font-size:22px"><span style="color:#dcdfe3;font-style:italic;">()</span><span style="color:#b8bcc2;"> @50683</span></span>
<span class="t mo lnk" style="left:1689.7px;top:1236.8px;font-size:22px;">test.html:7</span>
<svg class="a" style="left:1473.3px;top:1291.8px;" width="16" height="12" viewBox="0 0 16 12"><path d="M.6.5h14.6L7.9 11.6z" fill="#919599"/></svg>
<span class="t mo" style="left:1494.9px;top:1277.2px;font-size:22px"><span style="color:#6fa8f0;">[1]</span></span>
<span class="t ko" style="left:1543.1px;top:1282.9px;font-size:19.5px;line-height:26px;color:#aeb2b8;">위치</span>
<span class="t mo" style="left:1592.9px;top:1277.2px;font-size:22px"><span style="color:#c6c9ce;">V8EventListener</span><span style="color:#b8bcc2;"> @65321</span></span>
<svg class="a" style="left:1503.2px;top:1331.9px;" width="16" height="12" viewBox="0 0 16 12"><path d="M.6.5h14.6L7.9 11.6z" fill="#919599"/></svg>
<span class="t mo" style="left:1524.8px;top:1317.3px;font-size:22px"><span style="color:#6fa8f0;">[1]</span></span>
<span class="t ko" style="left:1573.0px;top:1323.0px;font-size:19.5px;line-height:26px;color:#aeb2b8;">위치</span>
<span class="t mo" style="left:1622.8px;top:1317.3px;font-size:22px"><span style="color:#c6c9ce;">EventListener</span><span style="color:#b8bcc2;"> @65319</span></span>
<svg class="a" style="left:1533.4px;top:1371.9px;" width="16" height="12" viewBox="0 0 16 12"><path d="M.6.5h14.6L7.9 11.6z" fill="#919599"/></svg>
<span class="t mo" style="left:1555.0px;top:1357.3px;font-size:22px"><span style="color:#6fa8f0;">[1]</span></span>
<span class="t ko" style="left:1603.2px;top:1363.0px;font-size:19.5px;line-height:26px;color:#aeb2b8;">위치</span>
<span class="t mo" style="left:1653.0px;top:1357.3px;font-size:22px"><span style="color:#c6c9ce;">InternalNode</span><span style="color:#b8bcc2;"> @65317</span></span>
</div>
<span class="t " style="top:1086.2px;font-size:24px;line-height:29px;color:#c6c9ce;letter-spacing:0.45px;left:1961.3px;-webkit-text-stroke-width:.4px;">11</span>
<span class="t " style="top:1086.2px;font-size:24px;line-height:29px;color:#c6c9ce;letter-spacing:0.45px;left:2111.7px;-webkit-text-stroke-width:.4px;">12</span>
<span class="t " style="top:1086.2px;font-size:24px;line-height:29px;color:#9aa0a6;letter-spacing:1.10px;left:2163.5px;-webkit-text-stroke-width:.4px;">0 %</span>
<span class="t " style="top:1086.2px;font-size:24px;line-height:29px;color:#c6c9ce;letter-spacing:0.45px;left:2331.8px;-webkit-text-stroke-width:.4px;">32</span>
<span class="t " style="top:1086.2px;font-size:24px;line-height:29px;color:#9aa0a6;letter-spacing:1.10px;left:2383.9px;-webkit-text-stroke-width:.4px;">0 %</span>
<span class="t " style="top:1126.2px;font-size:24px;line-height:29px;color:#c6c9ce;letter-spacing:0.45px;left:1961.1px;-webkit-text-stroke-width:.4px;">10</span>
<span class="t " style="top:1126.2px;font-size:24px;line-height:29px;color:#c6c9ce;letter-spacing:0.45px;left:2111.2px;-webkit-text-stroke-width:.4px;">44</span>
<span class="t " style="top:1126.2px;font-size:24px;line-height:29px;color:#9aa0a6;letter-spacing:1.10px;left:2163.5px;-webkit-text-stroke-width:.4px;">0 %</span>
<span class="t " style="top:1126.2px;font-size:24px;line-height:29px;color:#c6c9ce;letter-spacing:0.45px;left:2331.6px;-webkit-text-stroke-width:.4px;">96</span>
<span class="t " style="top:1126.2px;font-size:24px;line-height:29px;color:#9aa0a6;letter-spacing:1.10px;left:2383.9px;-webkit-text-stroke-width:.4px;">0 %</span>
<span class="t " style="top:1166.2px;font-size:24px;line-height:29px;color:#c6c9ce;letter-spacing:0.45px;left:1975.1px;-webkit-text-stroke-width:.4px;">9</span>
<span class="t " style="top:1166.2px;font-size:24px;line-height:29px;color:#c6c9ce;letter-spacing:0.45px;left:2111.5px;-webkit-text-stroke-width:.4px;">36</span>
<span class="t " style="top:1166.2px;font-size:24px;line-height:29px;color:#9aa0a6;letter-spacing:1.10px;left:2163.5px;-webkit-text-stroke-width:.4px;">0 %</span>
<span class="t " style="top:1166.2px;font-size:24px;line-height:29px;color:#c6c9ce;letter-spacing:0.45px;left:2317.8px;-webkit-text-stroke-width:.4px;">388</span>
<span class="t " style="top:1166.2px;font-size:24px;line-height:29px;color:#9aa0a6;letter-spacing:1.10px;left:2383.9px;-webkit-text-stroke-width:.4px;">0 %</span>
<span class="t " style="top:1206.3px;font-size:24px;line-height:29px;color:#c6c9ce;letter-spacing:0.45px;left:1975.0px;-webkit-text-stroke-width:.4px;">8</span>
<span class="t " style="top:1206.3px;font-size:24px;line-height:29px;color:#c6c9ce;letter-spacing:0.45px;left:2111.7px;-webkit-text-stroke-width:.4px;">32</span>
<span class="t " style="top:1206.3px;font-size:24px;line-height:29px;color:#9aa0a6;letter-spacing:1.10px;left:2163.5px;-webkit-text-stroke-width:.4px;">0 %</span>
<span class="t " style="top:1206.3px;font-size:24px;line-height:29px;color:#c6c9ce;letter-spacing:0.45px;left:2317.7px;-webkit-text-stroke-width:.4px;">440</span>
<span class="t " style="top:1206.3px;font-size:24px;line-height:29px;color:#9aa0a6;letter-spacing:1.10px;left:2383.9px;-webkit-text-stroke-width:.4px;">0 %</span>
<span class="t " style="top:1282.3px;font-size:24px;line-height:29px;color:#c6c9ce;letter-spacing:0.45px;left:1975.2px;-webkit-text-stroke-width:.4px;">7</span>
<span class="t " style="top:1282.3px;font-size:24px;line-height:29px;color:#c6c9ce;letter-spacing:0.45px;left:2111.5px;-webkit-text-stroke-width:.4px;">48</span>
<span class="t " style="top:1282.3px;font-size:24px;line-height:29px;color:#9aa0a6;letter-spacing:1.10px;left:2163.5px;-webkit-text-stroke-width:.4px;">0 %</span>
<span class="t " style="top:1282.3px;font-size:24px;line-height:29px;color:#c6c9ce;letter-spacing:0.45px;left:2317.8px;-webkit-text-stroke-width:.4px;">488</span>
<span class="t " style="top:1282.3px;font-size:24px;line-height:29px;color:#9aa0a6;letter-spacing:1.10px;left:2383.9px;-webkit-text-stroke-width:.4px;">0 %</span>
<span class="t " style="top:1322.5px;font-size:24px;line-height:29px;color:#c6c9ce;letter-spacing:0.45px;left:1975.0px;-webkit-text-stroke-width:.4px;">6</span>
<span class="t " style="top:1322.5px;font-size:24px;line-height:29px;color:#c6c9ce;letter-spacing:0.45px;left:2111.4px;-webkit-text-stroke-width:.4px;">40</span>
<span class="t " style="top:1322.5px;font-size:24px;line-height:29px;color:#9aa0a6;letter-spacing:1.10px;left:2163.5px;-webkit-text-stroke-width:.4px;">0 %</span>
<span class="t " style="top:1322.5px;font-size:24px;line-height:29px;color:#c6c9ce;letter-spacing:0.45px;left:2317.8px;-webkit-text-stroke-width:.4px;">528</span>
<span class="t " style="top:1322.5px;font-size:24px;line-height:29px;color:#9aa0a6;letter-spacing:1.10px;left:2383.9px;-webkit-text-stroke-width:.4px;">0 %</span>
<span class="t " style="top:1362.7px;font-size:24px;line-height:29px;color:#c6c9ce;letter-spacing:0.45px;left:1975.0px;-webkit-text-stroke-width:.4px;">5</span>
<span class="t " style="top:1362.7px;font-size:24px;line-height:29px;color:#c6c9ce;letter-spacing:0.45px;left:2125.2px;-webkit-text-stroke-width:.4px;">0</span>
<span class="t " style="top:1362.7px;font-size:24px;line-height:29px;color:#9aa0a6;letter-spacing:1.10px;left:2163.5px;-webkit-text-stroke-width:.4px;">0 %</span>
<span class="t " style="top:1362.7px;font-size:24px;line-height:29px;color:#c6c9ce;letter-spacing:0.45px;left:2317.8px;-webkit-text-stroke-width:.4px;">528</span>
<span class="t " style="top:1362.7px;font-size:24px;line-height:29px;color:#9aa0a6;letter-spacing:1.10px;left:2383.9px;-webkit-text-stroke-width:.4px;">0 %</span>
<div class="a " style="left:1856px;top:1080px;width:1.6px;height:299.2px;background:#494c50;"></div>
<div class="a " style="left:1996.5px;top:1080px;width:1.6px;height:299.2px;background:#494c50;"></div>
<div class="a " style="left:2216.5px;top:1080px;width:1.6px;height:299.2px;background:#494c50;"></div>
</div>
<div class="a " style="left:1350px;top:1379.2px;width:1118px;height:2.4px;background:#494c50;"></div>
<div class="a " style="left:1350px;top:1381.6px;width:1118px;height:60px;background:#292a2d;"></div>
<div class="a " style="left:1358.8px;top:1391px;width:845px;height:42px;background:#202124;border-radius:5px;box-shadow:inset 0 0 0 2px #47494d"></div>
<span class="t " style="top:1399.7px;font-size:24px;line-height:29px;color:#dfe1e5;letter-spacing:0.19px;left:1365.1px;">hello</span>
<svg class="a" style="left:2035px;top:1398.7px;" width="26" height="26" viewBox="0 0 26 26"><circle cx="13" cy="13" r="12.8" fill="#c4c7cd"/><path d="M6.6 6.6l12.8 12.8M19.4 6.6L6.6 19.4" stroke="#f8f8f6" stroke-width="2.8"/></svg>
<span class="t " style="top:1398.1px;font-size:24px;line-height:29px;color:#9aa0a6;letter-spacing:-0.43px;left:2079.7px;">1/1</span>
<div class="a " style="left:2122.2px;top:1392.5px;width:1.6px;height:39px;background:#9a9ea3;"></div>
<div class="a " style="left:2162.2px;top:1392.5px;width:1.6px;height:39px;background:#9a9ea3;"></div>
<svg class="a" style="left:2131px;top:1402px;" width="22" height="18" viewBox="0 0 22 18"><path d="M3.6 13.2L11 6l7.4 7.2" fill="none" stroke="#d4d6d9" stroke-width="3.8"/></svg>
<svg class="a" style="left:2171px;top:1402px;" width="22" height="18" viewBox="0 0 22 18"><path d="M3.6 4.8L11 12l7.4-7.2" fill="none" stroke="#d4d6d9" stroke-width="3.8"/></svg>
<span class="t " style="top:1398.1px;font-size:24px;line-height:29px;color:#9aa0a6;letter-spacing:-1.73px;font-weight:700;left:2228.9px;">Aa</span>
<div class="a " style="left:2280px;top:1390.8px;width:173.6px;height:42.6px;background:#242528;border-radius:9px;box-shadow:inset 0 0 0 2px #3a3c40"></div>
<span class="t ko" style="left:2345.7px;top:1399.9px;font-size:21px;line-height:26px;color:#d0d3d8;">취소</span>
<div class="a " style="left:1350px;top:274px;width:2px;height:704px;background:#35373a;"></div>
<div class="a " style="left:1350px;top:1036.7px;width:2px;height:341.3px;background:#35373a;"></div>
<div class="a " style="left:1350px;top:341.8px;width:77.5px;height:28.3px;background:#c0c5cf;"></div>
<span class="t " style="top:347.6px;font-size:20px;line-height:24px;color:#3b3e45;letter-spacing:0.13px;left:1358.0px;">10.2 kB</span>
</div>
<div id="ring"></div>
<svg class="a" style="left:2438px;top:1418px;" width="30" height="22" viewBox="0 0 30 22"><path d="M30 0H24V1.6A24 24 0 0 1 12.6 22H30z" fill="#15171d"/><path d="M23.3 1.6A23.3 23.3 0 0 1 12 21.8" fill="none" stroke="#4b4d52" stroke-width="1.5"/></svg>
<svg class="a" style="left:0px;top:1418px;" width="30" height="22" viewBox="0 0 30 22"><path d="M0 0H2V1.6A24 24 0 0 0 13.4 22H0z" fill="#0e1016"/></svg>
</body></html>
